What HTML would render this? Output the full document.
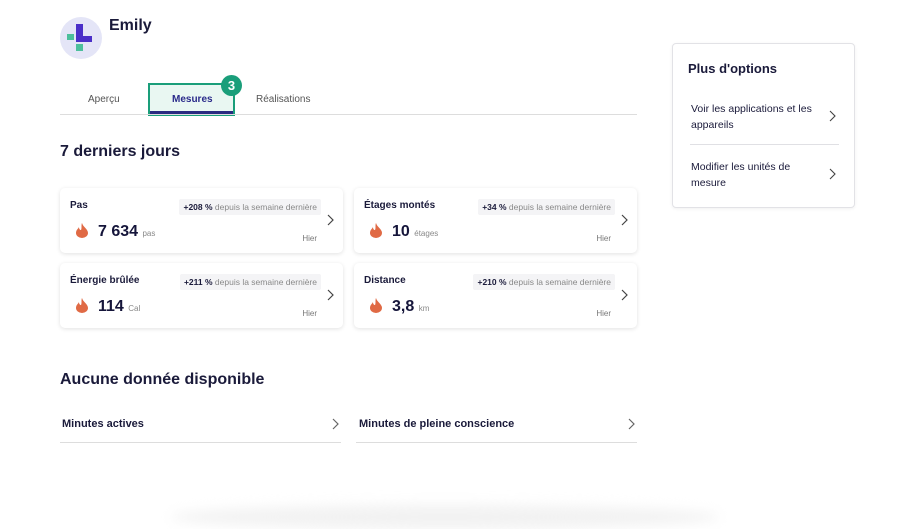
<!DOCTYPE html>
<html><head><meta charset="utf-8"><style>
*{margin:0;padding:0;box-sizing:border-box}
body{width:900px;height:511px;background:#fff;font-family:"Liberation Sans",sans-serif;color:#1a1a3a;position:relative;overflow:hidden}
.a{position:absolute}
.card{position:absolute;width:283px;height:65px;background:#fff;border-radius:5px;box-shadow:0 1px 4px rgba(0,0,0,.12)}
.t{position:absolute;left:10px;top:12px;font-size:10px;font-weight:bold;color:#1a1a3a}
.pill{position:absolute;top:11px;right:22px;background:#f4f4f6;font-size:8.5px;color:#888;padding:3px 4px;border-radius:2px}
.pill b{color:#1a1a3a}
.val{position:absolute;left:38px;top:35px;font-size:16px;font-weight:bold;color:#15153a}
.val span{font-size:8px;font-weight:normal;color:#888}
.hier{position:absolute;right:26px;top:46px;font-size:8px;color:#777}
.flame{position:absolute;left:16px;top:35px}
.chev{position:absolute}
</style></head><body>
<svg class="a" style="left:60px;top:17px" width="42" height="42" viewBox="0 0 42 42"><circle cx="21" cy="21" r="21" fill="#e4e5f7"/><rect x="16" y="7" width="7" height="18" fill="#4a2fc8"/><rect x="16" y="19" width="16" height="6" fill="#4a2fc8"/><rect x="7" y="17" width="7" height="6" fill="#4cbf9c"/><rect x="16" y="27" width="7" height="7" fill="#4cbf9c"/></svg>
<div class="a" style="left:109px;top:17px;font-size:16px;font-weight:bold">Emily</div>
<div class="a" style="left:88px;top:94px;font-size:10px;color:#555">Aperçu</div>
<div class="a" style="left:148px;top:83px;width:87px;height:33px;border:2px solid #1a9e7a;background:#e9f7f2"></div>
<div class="a" style="left:150px;top:111px;width:83px;height:3px;background:#2a2a80"></div>
<div class="a" style="left:172px;top:94px;font-size:10px;font-weight:bold;color:#2a2a8a">Mesures</div>
<div class="a" style="left:221px;top:75px;width:21px;height:21px;border-radius:50%;background:#1a9e7a;color:#fff;font-size:13px;font-weight:bold;text-align:center;line-height:21px">3</div>
<div class="a" style="left:256px;top:94px;font-size:10px;color:#555">Réalisations</div>
<div class="a" style="left:60px;top:114px;width:577px;height:1px;background:#ddd"></div>
<div class="a" style="left:60px;top:143px;font-size:16px;font-weight:bold">7 derniers jours</div>

<div class="card" style="left:60px;top:188px"><div class="t">Pas</div><div class="pill"><b>+208 %</b> depuis la semaine dernière</div>
<svg class="flame" width="12" height="15" viewBox="0 0 12 15"><path d="M6 0C7 4 12 6 12 10A6 5 0 0 1 0 10C0 7 2 6 3 4C3 6 4 7 5 7C6 5 5 2 6 0Z" fill="#e06a45"/></svg>
<div class="val">7 634 <span>pas</span></div><div class="hier">Hier</div>
<svg class="chev" style="left:267px;top:26px" width="7" height="12"><path d="M1 1L6 6L1 11" stroke="#444" fill="none" stroke-width="1.2"/></svg></div>

<div class="card" style="left:354px;top:188px"><div class="t">Étages montés</div><div class="pill"><b>+34 %</b> depuis la semaine dernière</div>
<svg class="flame" width="12" height="15" viewBox="0 0 12 15"><path d="M6 0C7 4 12 6 12 10A6 5 0 0 1 0 10C0 7 2 6 3 4C3 6 4 7 5 7C6 5 5 2 6 0Z" fill="#e06a45"/></svg>
<div class="val">10 <span>étages</span></div><div class="hier">Hier</div>
<svg class="chev" style="left:267px;top:26px" width="7" height="12"><path d="M1 1L6 6L1 11" stroke="#444" fill="none" stroke-width="1.2"/></svg></div>

<div class="card" style="left:60px;top:263px"><div class="t">Énergie brûlée</div><div class="pill"><b>+211 %</b> depuis la semaine dernière</div>
<svg class="flame" width="12" height="15" viewBox="0 0 12 15"><path d="M6 0C7 4 12 6 12 10A6 5 0 0 1 0 10C0 7 2 6 3 4C3 6 4 7 5 7C6 5 5 2 6 0Z" fill="#e06a45"/></svg>
<div class="val">114 <span>Cal</span></div><div class="hier">Hier</div>
<svg class="chev" style="left:267px;top:26px" width="7" height="12"><path d="M1 1L6 6L1 11" stroke="#444" fill="none" stroke-width="1.2"/></svg></div>

<div class="card" style="left:354px;top:263px"><div class="t">Distance</div><div class="pill"><b>+210 %</b> depuis la semaine dernière</div>
<svg class="flame" width="12" height="15" viewBox="0 0 12 15"><path d="M6 0C7 4 12 6 12 10A6 5 0 0 1 0 10C0 7 2 6 3 4C3 6 4 7 5 7C6 5 5 2 6 0Z" fill="#e06a45"/></svg>
<div class="val">3,8 <span>km</span></div><div class="hier">Hier</div>
<svg class="chev" style="left:267px;top:26px" width="7" height="12"><path d="M1 1L6 6L1 11" stroke="#444" fill="none" stroke-width="1.2"/></svg></div>

<div class="a" style="left:60px;top:371px;font-size:16px;font-weight:bold">Aucune donnée disponible</div>
<div class="a" style="left:62px;top:418px;font-size:11px;font-weight:bold">Minutes actives</div>
<svg class="a" style="left:332px;top:418px" width="7" height="12"><path d="M1 1L6 6L1 11" stroke="#666" fill="none" stroke-width="1.2"/></svg>
<div class="a" style="left:60px;top:442px;width:281px;height:1px;background:#ddd"></div>
<div class="a" style="left:359px;top:418px;font-size:11px;font-weight:bold">Minutes de pleine conscience</div>
<svg class="a" style="left:628px;top:418px" width="7" height="12"><path d="M1 1L6 6L1 11" stroke="#666" fill="none" stroke-width="1.2"/></svg>
<div class="a" style="left:356px;top:442px;width:281px;height:1px;background:#ddd"></div>
<div class="a" style="left:170px;top:505px;width:550px;height:24px;border-radius:50%;background:#f2f2f2;filter:blur(6px)"></div>

<div class="a" style="left:672px;top:43px;width:183px;height:165px;border:1px solid #e2e2e6;border-radius:4px;box-shadow:0 1px 3px rgba(0,0,0,.06)">
<div class="a" style="left:15px;top:17px;font-size:13px;font-weight:bold">Plus d'options</div>
<div class="a" style="left:18px;top:57px;font-size:10.5px;line-height:16px;width:130px">Voir les applications et les appareils</div>
<svg class="a" style="left:156px;top:66px" width="7" height="12"><path d="M1 1L6 6L1 11" stroke="#444" fill="none" stroke-width="1.1"/></svg>
<div class="a" style="left:17px;top:100px;width:149px;height:1px;background:#e0e0e4"></div>
<div class="a" style="left:18px;top:115px;font-size:10.5px;line-height:16px;width:130px">Modifier les unités de mesure</div>
<svg class="a" style="left:156px;top:124px" width="7" height="12"><path d="M1 1L6 6L1 11" stroke="#444" fill="none" stroke-width="1.1"/></svg>
</div>
</body></html>
